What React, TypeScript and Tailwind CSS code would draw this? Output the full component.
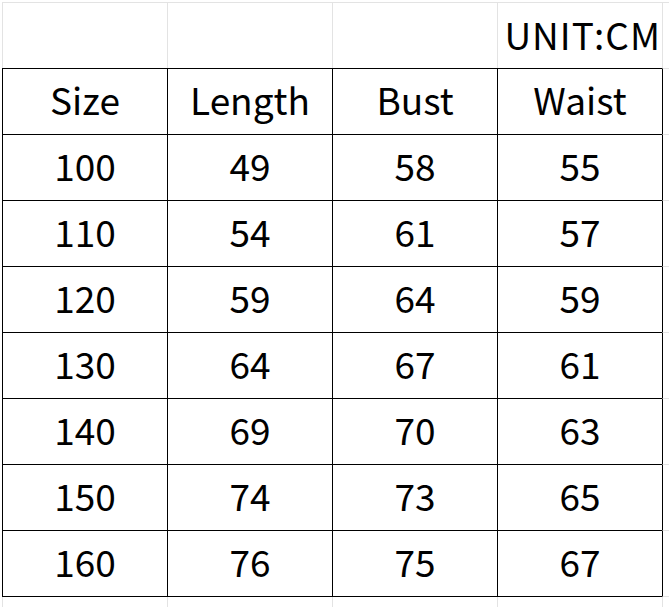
const header = ["Size", "Length", "Bust", "Waist"];
const rows = [
  ["100", "49", "58", "55"],
  ["110", "54", "61", "57"],
  ["120", "59", "64", "59"],
  ["130", "64", "67", "61"],
  ["140", "69", "70", "63"],
  ["150", "74", "73", "65"],
  ["160", "76", "75", "67"],
];

const font = { fontFamily: '"Noto Sans CJK JP", "Noto Sans", sans-serif' };

const Row = ({ cells, last }: { cells: string[]; last?: boolean }) => (
  <div className={`flex shrink-0 ${last ? "h-[67px]" : "h-[66px]"}`}>
    {cells.map((c, i) => (
      <div
        key={i}
        className={`w-[165px] shrink-0 border-l border-t border-black flex items-center justify-center pb-[4px] text-[37px] leading-none text-black ${last ? "border-b" : ""}`}
      >
        {c}
      </div>
    ))}
    <div className={`flex-1 border-l border-t border-l-black border-t-[#e3e3e3] ${last ? "border-b border-b-[#e3e3e3]" : ""}`} />
  </div>
);

export default function App() {
  return (
    <div className="w-[669px] h-[607px] overflow-hidden bg-white pt-[2px] pl-[2px] flex flex-col" style={font}>
      <div className="flex h-[66px] shrink-0">
        {[0, 1, 2].map((i) => (
          <div key={i} className="w-[165px] shrink-0 border-l border-t border-[#e3e3e3]" />
        ))}
        <div className="w-[165px] shrink-0 border-l border-t border-[#e3e3e3] flex items-center justify-end pr-[1px] pb-[2px] text-[37px] tracking-[1px] leading-none text-black">
          UNIT:CM
        </div>
        <div className="flex-1 border-l border-t border-[#e3e3e3]" />
      </div>
      <Row cells={header} />
      {rows.map((r, i) => (
        <Row key={i} cells={r} last={i === rows.length - 1} />
      ))}
      <div className="flex flex-1">
        {[0, 1, 2, 3, 4].map((i) => (
          <div key={i} className={`${i < 4 ? "w-[165px] shrink-0" : "flex-1"} border-l border-[#e3e3e3]`} />
        ))}
      </div>
    </div>
  );
}
